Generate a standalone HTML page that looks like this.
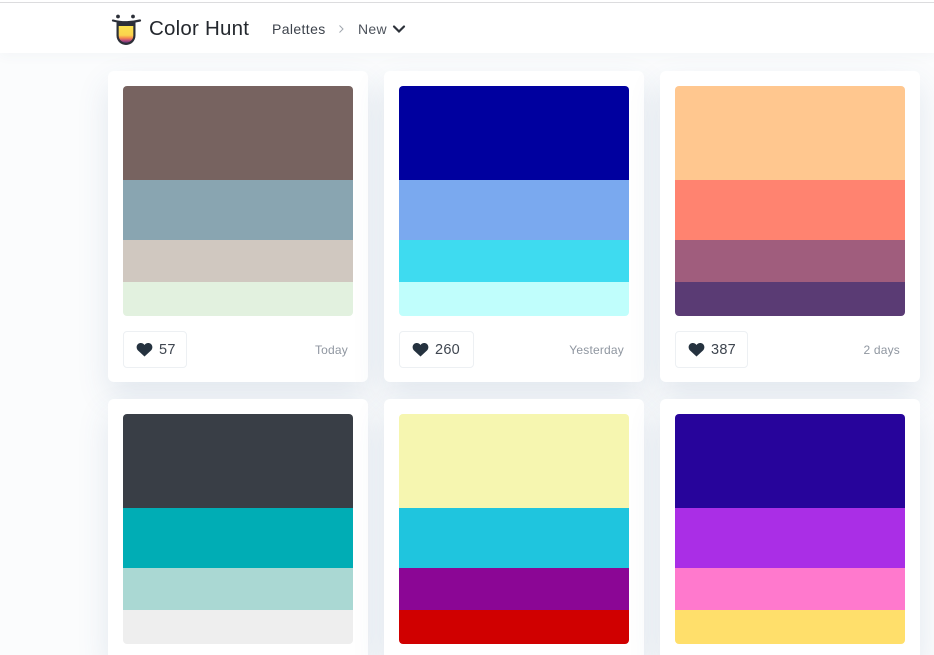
<!DOCTYPE html>
<html><head><meta charset="utf-8"><style>
html,body{margin:0;padding:0;width:934px;height:655px;overflow:hidden;background:#fbfcfd;font-family:"Liberation Sans",sans-serif}
#root{position:relative;width:934px;height:655px;overflow:hidden;background:#fbfcfd}
.abs{position:absolute}
#hdr{position:absolute;left:0;top:0;width:934px;height:53px;background:#fff;z-index:3;box-shadow:0 3px 12px rgba(40,70,110,.04)}
#hdr i{position:absolute;left:0;top:2px;width:934px;height:1px;background:#dcdcde}
.card{position:absolute;width:260px;height:311px;background:#fff;border-radius:6px;box-shadow:0 14px 32px rgba(55,90,140,.13)}
.card.low{height:256px;border-radius:6px 6px 0 0}
.pal{position:absolute;left:15px;top:15px;width:230px;height:230px;border-radius:4px;overflow:hidden}
.pal div{width:230px}
.a{height:94px}.b{height:60px}.c{height:42px}.d{height:34px}
.like{position:absolute;left:15px;top:260px;height:37px;box-sizing:border-box;border:1px solid #edf0f3;border-radius:4px;background:#fff}
.like svg{position:absolute;left:12px;top:10px}
.like span{position:absolute;left:35px;top:9px;font-size:14.5px;line-height:18px;color:#3f4650;letter-spacing:.25px}
.t{position:absolute;right:20px;top:271px;font-size:12px;line-height:16px;color:#8f96a0;letter-spacing:.2px}
</style></head><body><div id="root">
<div id="hdr"><i></i></div>
<svg class="abs" style="left:110px;top:12px;z-index:4" width="32" height="34" viewBox="0 0 32 34">
<defs><linearGradient id="g" x1="0" y1="0" x2="0" y2="1"><stop offset="0" stop-color="#fbe24e"/><stop offset=".55" stop-color="#fbd34e"/><stop offset=".72" stop-color="#f6874f"/><stop offset=".85" stop-color="#c2507a"/><stop offset="1" stop-color="#5a3278"/></linearGradient></defs>
<circle cx="8" cy="4.500" r="1.900" fill="#2c2f38"/><circle cx="23" cy="4.500" r="1.900" fill="#2c2f38"/>
<path d="M3 8.500Q15.500 12 30 8.500" fill="none" stroke="#2c2f38" stroke-width="2.200" stroke-linecap="round"/>
<path d="M6.500 10.500H25.500V23.500A9.500 9.500 0 0 1 6.500 23.500Z" fill="#2c2f38"/>
<path d="M8.700 14H23.300V23.500A7.300 7.300 0 0 1 8.700 23.500Z" fill="url(#g)"/>
</svg>
<div class="abs" style="left:149px;top:16px;font-size:20.500px;line-height:26px;color:#24282e;letter-spacing:.22px;z-index:4">Color Hunt</div>
<div class="abs" style="left:272px;top:20px;font-size:14px;line-height:18px;color:#3c424b;letter-spacing:.38px;z-index:4">Palettes</div>
<svg class="abs" style="left:338px;top:24px;z-index:4" width="7" height="10" viewBox="0 0 7 10"><path d="M1.500 1.500L5 5L1.500 8.500" fill="none" stroke="#a0a6ae" stroke-width="1"/></svg>
<div class="abs" style="left:358px;top:20px;font-size:14px;line-height:18px;color:#4d535c;letter-spacing:.3px;z-index:4">New</div>
<svg class="abs" style="left:392px;top:24px;z-index:4" width="14" height="11" viewBox="0 0 14 11"><path d="M2 2.500L7 7.500L12 2.500" fill="none" stroke="#2d323a" stroke-width="2.200" stroke-linecap="round"/></svg>

<div class="card" style="left:108px;top:71px"><div class="pal"><div class="a" style="background:#776360"></div><div class="b" style="background:#89a5b1"></div><div class="c" style="background:#d0c8c0"></div><div class="d" style="background:#e2f1df"></div></div>
<div class="like" style="width:64px"><svg width="17" height="15" viewBox="0 0 17 15"><path d="M8.500 14.500L2 8.500C-.5 6 .5 1.500 4.200 1C6 .8 7.500 1.600 8.500 3C9.500 1.600 11 .8 12.800 1C16.500 1.500 17.500 6 15 8.500Z" fill="#25323f"/></svg><span>57</span></div><div class="t">Today</div></div>

<div class="card" style="left:384px;top:71px"><div class="pal"><div class="a" style="background:#00009f"></div><div class="b" style="background:#7aa9ef"></div><div class="c" style="background:#3edbf0"></div><div class="d" style="background:#c0fefc"></div></div>
<div class="like" style="width:75px"><svg width="17" height="15" viewBox="0 0 17 15"><path d="M8.500 14.500L2 8.500C-.5 6 .5 1.500 4.200 1C6 .8 7.500 1.600 8.500 3C9.500 1.600 11 .8 12.800 1C16.500 1.500 17.500 6 15 8.500Z" fill="#25323f"/></svg><span>260</span></div><div class="t">Yesterday</div></div>

<div class="card" style="left:660px;top:71px"><div class="pal"><div class="a" style="background:#ffc78f"></div><div class="b" style="background:#ff8370"></div><div class="c" style="background:#a05d7d"></div><div class="d" style="background:#5a3b74"></div></div>
<div class="like" style="width:73px"><svg width="17" height="15" viewBox="0 0 17 15"><path d="M8.500 14.500L2 8.500C-.5 6 .5 1.500 4.200 1C6 .8 7.500 1.600 8.500 3C9.500 1.600 11 .8 12.800 1C16.500 1.500 17.500 6 15 8.500Z" fill="#25323f"/></svg><span>387</span></div><div class="t">2 days</div></div>

<div class="card low" style="left:108px;top:399px"><div class="pal"><div class="a" style="background:#393e46"></div><div class="b" style="background:#00adb5"></div><div class="c" style="background:#aad8d3"></div><div class="d" style="background:#eeeeee"></div></div></div>
<div class="card low" style="left:384px;top:399px"><div class="pal"><div class="a" style="background:#f6f6b0"></div><div class="b" style="background:#1fc5de"></div><div class="c" style="background:#8b0695"></div><div class="d" style="background:#d00000"></div></div></div>
<div class="card low" style="left:660px;top:399px"><div class="pal"><div class="a" style="background:#27049b"></div><div class="b" style="background:#aa2ee6"></div><div class="c" style="background:#ff79cd"></div><div class="d" style="background:#ffdf6b"></div></div></div>
</div></body></html>
